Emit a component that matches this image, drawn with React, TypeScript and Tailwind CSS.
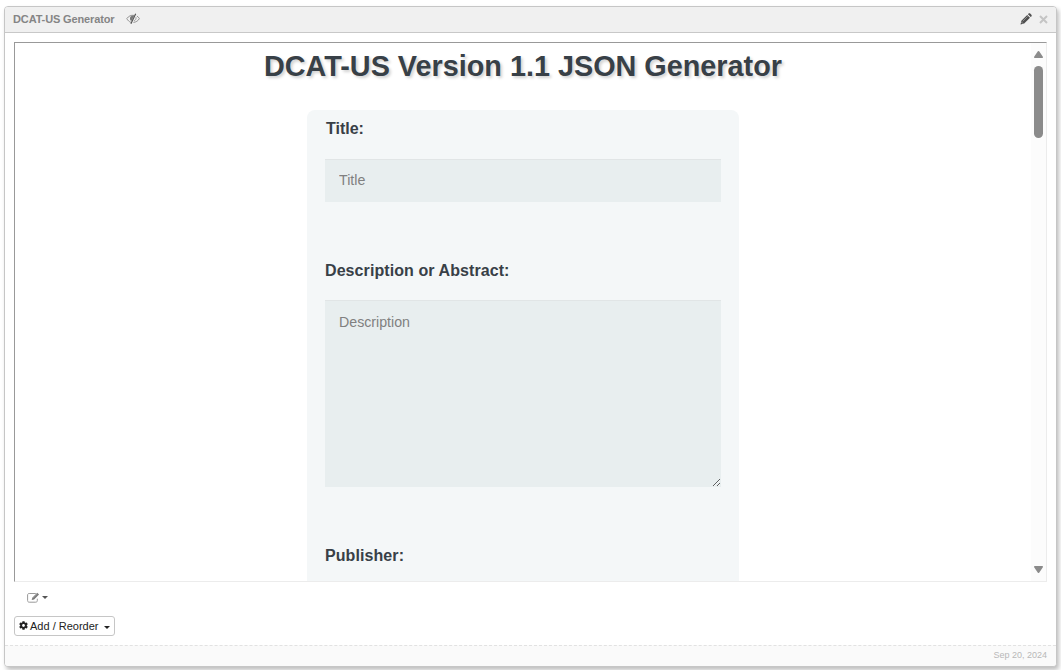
import React from "react";
import { FaCog } from "react-icons/fa";

function EyeClosedIcon() {
  return (
    <svg className="h-[12px] w-[14px]" viewBox="0 0 14 12" fill="none" stroke="#8a8a8a">
      <path d="M8.1 2.4C5 1.8 2.5 3.2.8 5.6c1 1.9 2.5 3.2 4.1 3.7M10.9 3c1.1.7 1.9 1.5 2.5 2.6-1.3 2.3-3.4 3.6-6 3.8" strokeWidth=".9" />
      <path d="M8.3 2.6C5.5 2.2 3.7 3.9 4 6c.1.9.7 1.6 1.4 2z" fill="#777" stroke="none" />
      <path d="M9.7.8 4.9 10.8" stroke="#555" strokeWidth="1.2" />
      <path d="M10 4.2c.3 1.7-.5 3-1.9 3.7" strokeWidth=".8" />
    </svg>
  );
}

function PencilIcon() {
  return (
    <svg className="h-[12px] w-[12px]" viewBox="0 0 12 12">
      <path d="M.5 11.5 1.4 7.8 7.2 2l2.8 2.8-5.8 5.8zM7.9 1.3l.7-.7c.5-.5 1.1-.5 1.6 0l1.2 1.2c.5.5.5 1.1 0 1.6l-.7.7z" fill="#505050" />
      <path d="m2.7 8.3 5-5" stroke="#a8a8a8" strokeWidth=".7" />
      <path d="m1.5 9.1 1.4 1.4" stroke="#eee" strokeWidth=".6" />
    </svg>
  );
}

function EditIcon() {
  return (
    <svg className="h-[11px] w-[13px]" viewBox="0 0 13 11" fill="none">
      <path d="M8.8 1.5H2.2C1.2 1.5.6 2 .6 2.9v5.7c0 1 .6 1.6 1.6 1.6h6.5c1 0 1.6-.6 1.6-1.6V6.7" stroke="#999" />
      <path d="M4.7 8.1 5.3 5.7 10.2.8l1.8 1.8-4.9 4.9z" fill="#777" />
      <path d="m6 6.2 4.3-4.3" stroke="#bbb" strokeWidth=".5" />
    </svg>
  );
}

function Caret() {
  return <span className="border-x-[3px] border-t-[3px] border-x-transparent border-t-current" />;
}

export default function App() {
  return (
    <div className="h-[670px] w-[1061px] overflow-hidden bg-white pt-[6px] pl-[4px] font-['Liberation_Sans',Arial,sans-serif]">
      <section className="flex h-[661px] w-[1053px] flex-col overflow-hidden rounded-[4px] border border-[#c6c6c6] bg-white shadow-[2px_3px_4px_rgba(0,0,0,0.25)]">
        <header className="flex h-[26px] shrink-0 items-center border-b border-[#c8c8c8] bg-[#f0f0f0] pr-[8px] pb-px pl-[8px]">
          <h2 className="w-[102px] text-[11px] leading-[14px] font-bold tracking-[-0.13px] whitespace-nowrap text-[#858585]">DCAT-US Generator</h2>
          <span className="ml-[11px]"><EyeClosedIcon /></span>
          <span className="ml-auto"><PencilIcon /></span>
          <svg className="ml-[7px] h-[9px] w-[9px]" viewBox="0 0 9 9">
            <path d="m1 1 7 7M8 1 1 8" stroke="#c5c5c5" strokeWidth="2" />
          </svg>
        </header>
        <main className="flex flex-1 flex-col items-start pt-[9px] pl-[9px]">
          <div className="flex h-[540px] w-[1033px] shrink-0 overflow-hidden border border-t-[#999] border-r-[#ececec] border-b-[#ececec] border-l-[#999]">
            <div className="flex flex-1 flex-col items-center overflow-hidden">
              <h1 className="mt-[5px] h-[36px] text-[28.8px] leading-[36px] font-bold whitespace-nowrap text-[#384047] [text-shadow:2px_2px_3px_rgba(0,0,0,0.18)]">DCAT-US Version 1.1 JSON Generator</h1>
              <form className="mt-[26px] w-[432px] shrink-0 rounded-t-[8px] bg-[#f4f7f8] px-[18px] pt-[9px] text-[#384047]">
                <label className="block h-[20px] pl-px text-[16px] leading-[20px] font-bold">Title:</label>
                <input placeholder="Title" className="mt-[20px] block h-[43px] w-[396px] rounded-none border-t border-[#e1e5e6] bg-[#e8eeef] px-[14px] pb-[2px] text-[14.2px] outline-none placeholder:text-[#808080]" />
                <label className="mt-[59px] block h-[20px] text-[16px] leading-[20px] font-bold tracking-[0.08px]">Description or Abstract:</label>
                <textarea placeholder="Description" className="mt-[19px] block h-[187px] w-[396px] resize rounded-none border-t border-[#e1e5e6] bg-[#e8eeef] px-[14px] pt-[13px] text-[14.2px] leading-[17px] outline-none placeholder:text-[#808080]" />
                <label className="mt-[59px] block h-[60px] text-[16px] leading-[20px] font-bold tracking-[0.08px]">Publisher:</label>
              </form>
            </div>
            <div className="flex w-[15px] shrink-0 flex-col items-center bg-[#fcfcfc] pt-[8px] pb-[8px]">
              <svg className="h-[7px] w-[9px]" viewBox="0 0 9 7"><path d="M4.5.8 8.2 6.2H.8z" fill="#8b8b8b" stroke="#8b8b8b" strokeWidth="1.6" strokeLinejoin="round" /></svg>
              <span className="mt-[8px] h-[72px] w-[9px] rounded-full bg-[#8b8b8b]" />
              <svg className="mt-auto h-[7px] w-[9px]" viewBox="0 0 9 7"><path d="M4.5 6.2.8.8h7.4z" fill="#8b8b8b" stroke="#8b8b8b" strokeWidth="1.6" strokeLinejoin="round" /></svg>
            </div>
          </div>
          <button className="mt-[9px] ml-[13px] flex h-[13px] items-center gap-[2px] text-[#555]">
            <EditIcon />
            <Caret />
          </button>
          <button className="mt-[12px] flex h-[20px] w-[101px] items-center rounded-[3px] border border-[#c6c6c6] bg-white pb-px pl-[4px] text-[11px] leading-[14px] whitespace-nowrap text-[#222]">
            <FaCog className="mr-[2px] h-[9px] w-[9px] shrink-0" />
            <span>Add / Reorder</span>
            <span className="mt-[3px] ml-[6px] flex"><Caret /></span>
          </button>
        </main>
        <footer className="flex h-[21px] shrink-0 items-center justify-end border-t border-dashed border-[#e2e2e2] bg-[#fafafa] pr-[9px] text-[9px] text-[#b8b8b8]">Sep 20, 2024</footer>
      </section>
    </div>
  );
}
